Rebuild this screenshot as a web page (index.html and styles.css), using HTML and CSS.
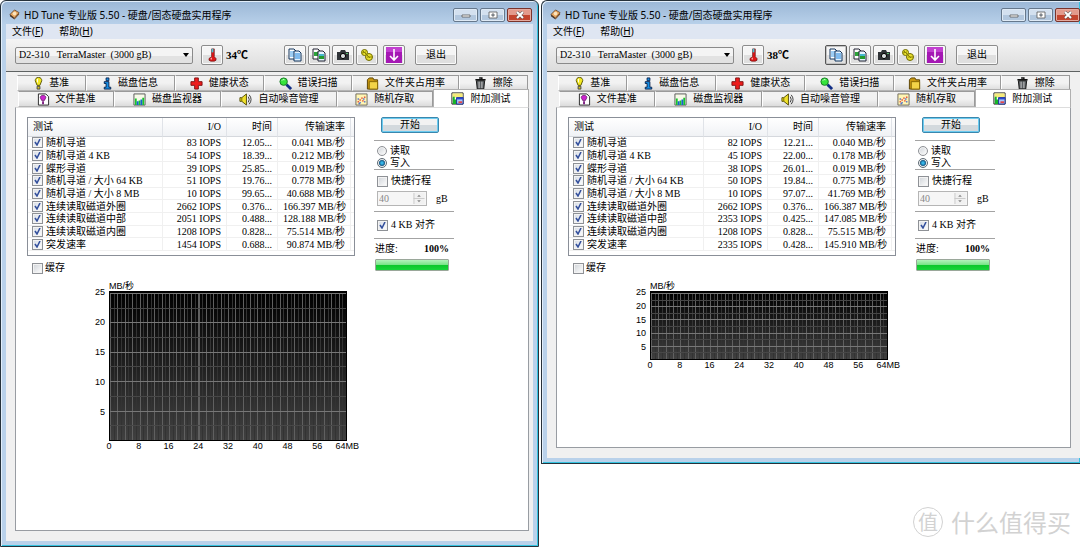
FILE: index.html
```html
<!DOCTYPE html>
<html lang="zh-CN">
<head>
<meta charset="utf-8">
<title>HD Tune 专业版 5.50</title>
<link rel="stylesheet" href="styles.css">
</head>
<body>
<svg class="sprite" aria-hidden="true">
  <symbol id="logo" viewBox="0 0 12 12"><path d="M1 6 6 1l5 3-5 6z" fill="#e9a860" stroke="#5b3a20" stroke-width=".8"/><path d="M1 6v2l5 3.500V10z" fill="#4a3322"/><path d="m6 10 5-6v2l-5 5.500z" fill="#7d5230"/><circle cx="6" cy="5" r="2" fill="#fbe3bd"/></symbol>
  <symbol id="thermo" viewBox="0 0 10 16"><path d="M4 1h3v9l2 2v2l-2 1H3l-2-1v-2l3-2z" fill="#e01818" stroke="#6b0d0d" stroke-width=".8"/><path d="M4 1h2v4H4z" fill="#45c8d8"/><path d="M3 11h1v2H3z" fill="#fff"/></symbol>
  <symbol id="copy" viewBox="0 0 14 14"><path d="M1 1h5l2 2v8H1z" fill="#fff" stroke="#12345c"/><path d="M2 4h4M2 6h4M2 8h4" stroke="#3c9be8"/><path d="M6 3h5l2 2v8H6z" fill="#e4f3ff" stroke="#12345c"/><path d="M7 6h5M7 8h5M7 10h5" stroke="#1d83dd"/></symbol>
  <symbol id="copyimg" viewBox="0 0 14 14"><path d="M1 1h5l2 2v8H1z" fill="#fff" stroke="#223"/><path d="M2 4h4v4H2z" fill="#2ca33a"/><path d="M6 3h5l2 2v8H6z" fill="#e4f3ff" stroke="#223"/><path d="M7 6h5v5H7z" fill="#45b7cc"/><path d="M7 8h5v3H7z" fill="#229a2e"/></symbol>
  <symbol id="camera" viewBox="0 0 14 12"><path d="M1 3h3l1-2h4l1 2h3v8H1z" fill="#303438"/><circle cx="7" cy="7" r="2.600" fill="#d9dddf" stroke="#000"/><path d="M10 4h2v1h-2z" fill="#58c06c"/></symbol>
  <symbol id="save" viewBox="0 0 14 14"><circle cx="4.500" cy="4.500" r="3" fill="#e8e02e" stroke="#6f6a00"/><circle cx="9" cy="9" r="3.500" fill="#e8e02e" stroke="#6f6a00"/><path d="m3 3 7 7M7 9h5M2 5l4-1" stroke="#8a8200"/></symbol>
  <symbol id="down" viewBox="0 0 16 16"><path d="M0 0h16v16H0z" fill="#a518b4"/><path d="M0 0h16v5H0z" fill="#c23fd0"/><path d="M8 2v10M4 9l4 4 4-4" fill="none" stroke="#fff" stroke-width="1.600"/></symbol>
  <symbol id="bulb" viewBox="0 0 9 14"><path d="M4.500 .500c2.500 0 3.500 1.500 3.500 3.500L6 9H3L1 4C1 2 2 .500 4.500.500z" fill="#f4ea22" stroke="#555000"/><path d="M3 2h1v4H3z" fill="#fff"/><path d="M3 10h3v3H3z" fill="#d6c51a" stroke="#444"/></symbol>
  <symbol id="info" viewBox="0 0 9 14"><path d="M3 1h3v3H3zM1 5h5v6h2v2H1v-2h2V7H1z" fill="#1590e6" stroke="#06204d"/></symbol>
  <symbol id="cross" viewBox="0 0 14 14"><path d="M5 1h4v4h4v4H9v4H5V9H1V5h4z" fill="#ee1c1c" stroke="#7d1010"/></symbol>
  <symbol id="find" viewBox="0 0 14 14"><path d="m8 8 5 5" stroke="#102d85" stroke-width="3"/><circle cx="5" cy="5" r="4" fill="#35e43c" stroke="#167524"/><path d="M3 4q1-2 3-1" fill="none" stroke="#d5ffd5"/></symbol>
  <symbol id="folder" viewBox="0 0 13 14"><path d="M1 3 3 1h4l1 2h4v10H1z" fill="#c99812" stroke="#574000"/><path d="M3 5h9v8H3z" fill="#f3d447" stroke="#846500"/></symbol>
  <symbol id="trash" viewBox="0 0 13 14"><path d="M1 3h11M5 1h3v2" fill="none" stroke="#111" stroke-width="1.500"/><path d="M2 4h9l-1 9H3z" fill="#5b5f62" stroke="#111"/><path d="M5 5v7M8 5v7" stroke="#d0d0d0"/></symbol>
  <symbol id="filebench" viewBox="0 0 13 14"><path d="M1 1h8l3 3v9H1z" fill="#fff" stroke="#222"/><path d="M6 2.500c2 0 3 1 3 2.500L7.500 8h-3L3 5c0-1.500 1-2.500 3-2.500z" fill="#cc25cf" stroke="#531056" stroke-width=".7"/><path d="M5 9h2v3H5z" fill="#7c1a80"/></symbol>
  <symbol id="monitor" viewBox="0 0 14 14"><path d="M1 1h12v12H1z" fill="#f7fbe9" stroke="#555"/><path d="M2 6h2v7H2zM6 8h2v5H6zM10 5h2v8h-2z" fill="#18c72a"/><path d="M4 9h2v4H4zM8 7h2v6H8z" fill="#1762cc"/></symbol>
  <symbol id="speaker" viewBox="0 0 14 14"><path d="M1 5h2l5-4v12L3 9H1z" fill="#f0e12b" stroke="#514a00"/><path d="M3 5v4" stroke="#776d00"/><path d="M10 4q2 3 0 6M11 2q4 5 0 10" fill="none" stroke="#333"/></symbol>
  <symbol id="scatter" viewBox="0 0 14 14"><path d="M1 1h12v12H1z" fill="#fff6b4" stroke="#6b675b"/><path d="M3 9h1v1H3zM5 7h1v1H5zM8 8h1v1H8zM10 4h1v1h-1zM7 5h1v1H7z" fill="#e02828" stroke="#e02828" stroke-width=".4"/><path d="M3 6h1v1H3zM5 10h1v1H5zM9 6h1v1H9zM10 9h1v1h-1zM4 11h1v1H4z" fill="#315bd4" stroke="#315bd4" stroke-width=".4"/></symbol>
  <symbol id="extra" viewBox="0 0 14 14"><path d="M1 1h12v12H1z" fill="#fff" stroke="#111"/><path d="M1.500 1.500h11V6h-11z" fill="#f5eb7b"/><path d="M2 5h2v8H2zM4 8h2v5H4z" fill="#16b528"/><path d="M6 6h7v7H6z" fill="#a6c8ff" stroke="#182a92"/><path d="M6 6h7v2H6z" fill="#2947cb"/><path d="M8 10h4v2H8z" fill="#e44848"/></symbol>
</svg>

<main class="desktop">
  <section class="window window-full">
    <header class="titlebar">
      <svg class="logo"><use href="#logo"/></svg>
      <h1>HD Tune 专业版 5.50 - 硬盘/固态硬盘实用程序</h1>
      <div class="captions">
        <button class="caption" aria-label="最小化"><svg viewBox="0 0 10 8"><path d="M1 4h8v2H1z" fill="#fff" stroke="#555" stroke-width=".8"/></svg></button>
        <button class="caption" aria-label="最大化"><svg viewBox="0 0 10 8"><path d="M1 1h8v6H1zM4 3v2h2V3z" fill="#fff" fill-rule="evenodd" stroke="#555" stroke-width=".8"/></svg></button>
        <button class="caption close" aria-label="关闭"><svg viewBox="0 0 10 8"><path d="m2 1 6 6M8 1 2 7" stroke="#555" stroke-width="3"/><path d="m2 1 6 6M8 1 2 7" stroke="#fff" stroke-width="2"/></svg></button>
      </div>
    </header>
    <div class="client">
      <nav class="menu"><button>文件(<u>F</u>)</button><button>帮助(<u>H</u>)</button></nav>
      <div class="toolbar">
        <select class="drive" aria-label="驱动器"><option>D2-310&nbsp;&nbsp; TerraMaster&nbsp; (3000 gB)</option></select>
        <button class="tool" aria-label="温度"><svg class="thermo"><use href="#thermo"/></svg></button>
        <output class="temp">34℃</output>
        <div class="tools">
          <button class="tool" aria-label="复制文本"><svg><use href="#copy"/></svg></button>
          <button class="tool" aria-label="复制截图"><svg><use href="#copyimg"/></svg></button>
          <button class="tool" aria-label="截图"><svg><use href="#camera"/></svg></button>
          <button class="tool" aria-label="选项"><svg><use href="#save"/></svg></button>
          <button class="tool tool-down" aria-label="保存"><svg><use href="#down"/></svg></button>
          <button class="tool exit">退出</button>
        </div>
      </div>
      <div class="page">
        <div class="tabs tabs-back">
          <button><svg class="slim"><use href="#bulb"/></svg>基准</button>
          <button class="w89"><svg class="slim"><use href="#info"/></svg>磁盘信息</button>
          <button class="w89"><svg><use href="#cross"/></svg>健康状态</button>
          <button class="w89"><svg><use href="#find"/></svg>错误扫描</button>
          <button class="w107"><svg><use href="#folder"/></svg>文件夹占用率</button>
          <button><svg><use href="#trash"/></svg>擦除</button>
        </div>
        <div class="tabs tabs-front">
          <button class="w96"><svg><use href="#filebench"/></svg>文件基准</button>
          <button class="w107"><svg><use href="#monitor"/></svg>磁盘监视器</button>
          <button class="w116"><svg><use href="#speaker"/></svg>自动噪音管理</button>
          <button class="w96"><svg><use href="#scatter"/></svg>随机存取</button>
          <button class="w96 active"><svg><use href="#extra"/></svg>附加测试</button>
        </div>
        <div class="panel">
          <div class="results">
            <div class="list">
              <table>
                <colgroup><col class="c-name"><col class="c-io"><col class="c-time"><col class="c-rate"><col></colgroup>
                <thead><tr><th>测试</th><th>I/O</th><th>时间</th><th>传输速率</th><th></th></tr></thead>
                <tbody>
                  <tr><td><label><input type="checkbox" checked>随机寻道</label></td><td>83 IOPS</td><td>12.05...</td><td>0.041 MB/秒</td><td></td></tr>
                  <tr><td><label><input type="checkbox" checked>随机寻道 4 KB</label></td><td>54 IOPS</td><td>18.39...</td><td>0.212 MB/秒</td><td></td></tr>
                  <tr><td><label><input type="checkbox" checked>蝶形寻道</label></td><td>39 IOPS</td><td>25.85...</td><td>0.019 MB/秒</td><td></td></tr>
                  <tr><td><label><input type="checkbox" checked>随机寻道 / 大小 64 KB</label></td><td>51 IOPS</td><td>19.76...</td><td>0.778 MB/秒</td><td></td></tr>
                  <tr><td><label><input type="checkbox" checked>随机寻道 / 大小 8 MB</label></td><td>10 IOPS</td><td>99.65...</td><td>40.688 MB/秒</td><td></td></tr>
                  <tr><td><label><input type="checkbox" checked>连续读取磁道外圈</label></td><td>2662 IOPS</td><td>0.376...</td><td>166.397 MB/秒</td><td></td></tr>
                  <tr><td><label><input type="checkbox" checked>连续读取磁道中部</label></td><td>2051 IOPS</td><td>0.488...</td><td>128.188 MB/秒</td><td></td></tr>
                  <tr><td><label><input type="checkbox" checked>连续读取磁道内圈</label></td><td>1208 IOPS</td><td>0.828...</td><td>75.514 MB/秒</td><td></td></tr>
                  <tr><td><label><input type="checkbox" checked>突发速率</label></td><td>1454 IOPS</td><td>0.688...</td><td>90.874 MB/秒</td><td></td></tr>
                </tbody>
              </table>
            </div>
            <label class="cache"><input type="checkbox">缓存</label>
            <figure class="chart">
              <figcaption>MB/秒</figcaption>
              <div class="y-axis"><span>25</span><span>20</span><span>15</span><span>10</span><span>5</span></div>
              <div class="plot"></div>
              <div class="x-axis"><span>0</span><span>8</span><span>16</span><span>24</span><span>32</span><span>40</span><span>48</span><span>56</span><span>64MB</span></div>
            </figure>
          </div>
          <form class="side">
            <button type="button" class="start">开始</button>
            <div class="group modes">
              <label><input type="radio" name="mode1">读取</label>
              <label><input type="radio" name="mode1" checked>写入</label>
            </div>
            <div class="group stroke">
              <label><input type="checkbox">快捷行程</label>
              <div class="size"><div class="spin"><input type="text" value="40" disabled aria-label="行程大小"><svg viewBox="0 0 12 12"><path d="M0 0h12v12H0z" fill="#f1f1f1"/><path d="M0 6h12M.500 0v12" stroke="#c8c8c8"/><path d="m4 4 2-2 2 2zM4 8l2 2 2-2z" fill="#888"/></svg></div><span>gB</span></div>
            </div>
            <div class="group align"><label><input type="checkbox" checked>4 KB 对齐</label></div>
            <div class="group progress">
              <div class="status"><label for="p1">进度:</label><b>100%</b></div>
              <progress id="p1" value="100" max="100"></progress>
            </div>
          </form>
        </div>
      </div>
    </div>
  </section>

  <section class="window window-short">
    <header class="titlebar">
      <svg class="logo"><use href="#logo"/></svg>
      <h1>HD Tune 专业版 5.50 - 硬盘/固态硬盘实用程序</h1>
      <div class="captions">
        <button class="caption" aria-label="最小化"><svg viewBox="0 0 10 8"><path d="M1 4h8v2H1z" fill="#fff" stroke="#555" stroke-width=".8"/></svg></button>
        <button class="caption" aria-label="最大化"><svg viewBox="0 0 10 8"><path d="M1 1h8v6H1zM4 3v2h2V3z" fill="#fff" fill-rule="evenodd" stroke="#555" stroke-width=".8"/></svg></button>
        <button class="caption close" aria-label="关闭"><svg viewBox="0 0 10 8"><path d="m2 1 6 6M8 1 2 7" stroke="#555" stroke-width="3"/><path d="m2 1 6 6M8 1 2 7" stroke="#fff" stroke-width="2"/></svg></button>
      </div>
    </header>
    <div class="client">
      <nav class="menu"><button>文件(<u>F</u>)</button><button>帮助(<u>H</u>)</button></nav>
      <div class="toolbar">
        <select class="drive" aria-label="驱动器"><option>D2-310&nbsp;&nbsp; TerraMaster&nbsp; (3000 gB)</option></select>
        <button class="tool" aria-label="温度"><svg class="thermo"><use href="#thermo"/></svg></button>
        <output class="temp">38℃</output>
        <div class="tools">
          <button class="tool focused" aria-label="复制文本"><svg><use href="#copy"/></svg></button>
          <button class="tool" aria-label="复制截图"><svg><use href="#copyimg"/></svg></button>
          <button class="tool" aria-label="截图"><svg><use href="#camera"/></svg></button>
          <button class="tool" aria-label="选项"><svg><use href="#save"/></svg></button>
          <button class="tool tool-down" aria-label="保存"><svg><use href="#down"/></svg></button>
          <button class="tool exit">退出</button>
        </div>
      </div>
      <div class="page">
        <div class="tabs tabs-back">
          <button><svg class="slim"><use href="#bulb"/></svg>基准</button>
          <button class="w89"><svg class="slim"><use href="#info"/></svg>磁盘信息</button>
          <button class="w89"><svg><use href="#cross"/></svg>健康状态</button>
          <button class="w89"><svg><use href="#find"/></svg>错误扫描</button>
          <button class="w107"><svg><use href="#folder"/></svg>文件夹占用率</button>
          <button><svg><use href="#trash"/></svg>擦除</button>
        </div>
        <div class="tabs tabs-front">
          <button class="w96"><svg><use href="#filebench"/></svg>文件基准</button>
          <button class="w107"><svg><use href="#monitor"/></svg>磁盘监视器</button>
          <button class="w116"><svg><use href="#speaker"/></svg>自动噪音管理</button>
          <button class="w96"><svg><use href="#scatter"/></svg>随机存取</button>
          <button class="w96 active"><svg><use href="#extra"/></svg>附加测试</button>
        </div>
        <div class="panel">
          <div class="results">
            <div class="list">
              <table>
                <colgroup><col class="c-name"><col class="c-io"><col class="c-time"><col class="c-rate"><col></colgroup>
                <thead><tr><th>测试</th><th>I/O</th><th>时间</th><th>传输速率</th><th></th></tr></thead>
                <tbody>
                  <tr><td><label><input type="checkbox" checked>随机寻道</label></td><td>82 IOPS</td><td>12.21...</td><td>0.040 MB/秒</td><td></td></tr>
                  <tr><td><label><input type="checkbox" checked>随机寻道 4 KB</label></td><td>45 IOPS</td><td>22.00...</td><td>0.178 MB/秒</td><td></td></tr>
                  <tr><td><label><input type="checkbox" checked>蝶形寻道</label></td><td>38 IOPS</td><td>26.01...</td><td>0.019 MB/秒</td><td></td></tr>
                  <tr><td><label><input type="checkbox" checked>随机寻道 / 大小 64 KB</label></td><td>50 IOPS</td><td>19.84...</td><td>0.775 MB/秒</td><td></td></tr>
                  <tr><td><label><input type="checkbox" checked>随机寻道 / 大小 8 MB</label></td><td>10 IOPS</td><td>97.07...</td><td>41.769 MB/秒</td><td></td></tr>
                  <tr><td><label><input type="checkbox" checked>连续读取磁道外圈</label></td><td>2662 IOPS</td><td>0.376...</td><td>166.387 MB/秒</td><td></td></tr>
                  <tr><td><label><input type="checkbox" checked>连续读取磁道中部</label></td><td>2353 IOPS</td><td>0.425...</td><td>147.085 MB/秒</td><td></td></tr>
                  <tr><td><label><input type="checkbox" checked>连续读取磁道内圈</label></td><td>1208 IOPS</td><td>0.828...</td><td>75.515 MB/秒</td><td></td></tr>
                  <tr><td><label><input type="checkbox" checked>突发速率</label></td><td>2335 IOPS</td><td>0.428...</td><td>145.910 MB/秒</td><td></td></tr>
                </tbody>
              </table>
            </div>
            <label class="cache"><input type="checkbox">缓存</label>
            <figure class="chart">
              <figcaption>MB/秒</figcaption>
              <div class="y-axis"><span>25</span><span>20</span><span>15</span><span>10</span><span>5</span></div>
              <div class="plot"></div>
              <div class="x-axis"><span>0</span><span>8</span><span>16</span><span>24</span><span>32</span><span>40</span><span>48</span><span>56</span><span>64MB</span></div>
            </figure>
          </div>
          <form class="side">
            <button type="button" class="start">开始</button>
            <div class="group modes">
              <label><input type="radio" name="mode2">读取</label>
              <label><input type="radio" name="mode2" checked>写入</label>
            </div>
            <div class="group stroke">
              <label><input type="checkbox">快捷行程</label>
              <div class="size"><div class="spin"><input type="text" value="40" disabled aria-label="行程大小"><svg viewBox="0 0 12 12"><path d="M0 0h12v12H0z" fill="#f1f1f1"/><path d="M0 6h12M.500 0v12" stroke="#c8c8c8"/><path d="m4 4 2-2 2 2zM4 8l2 2 2-2z" fill="#888"/></svg></div><span>gB</span></div>
            </div>
            <div class="group align"><label><input type="checkbox" checked>4 KB 对齐</label></div>
            <div class="group progress">
              <div class="status"><label for="p2">进度:</label><b>100%</b></div>
              <progress id="p2" value="100" max="100"></progress>
            </div>
          </form>
        </div>
      </div>
    </div>
  </section>
  <div class="watermark"><span class="mark">值</span><span>什么值得买</span></div>
</main>
</body>
</html>
```
FILE: styles.css
```css
* { box-sizing: border-box; }

body {
  margin: 0;
  background: #fff;
  color: #000;
  font: 10px/12px "Liberation Serif", "Noto Sans CJK SC", serif;
}

button, input, select { font: inherit; color: inherit; margin: 0; padding: 0; }
.sprite { display: none; }

.desktop {
  position: relative;
  display: grid;
  grid-template-columns: minmax(0, 1fr) minmax(0, 1fr);
  column-gap: 2px;
  align-items: start;
  min-height: 100vh;
  overflow: hidden;
}

/* Window frame */
.window {
  display: flex;
  flex-direction: column;
  border: 1px solid #26313a;
  border-radius: 6px 6px 0 0;
  padding: 0 5px 5px;
  background: linear-gradient(#9bb7d6, #b9d1ea 24px);
  box-shadow: inset 1px 1px 0 #e2eefa, inset -1px -1px 0 #35c3e0;
}
.window-full { min-height: 100vh; }
.window-short { border-right: 0; padding-right: 0; border-top-right-radius: 0; }

.titlebar { display: flex; align-items: center; height: 23px; padding-left: 3px; }
.logo { width: 11px; height: 11px; margin: 3px 4px 0 0; }
.titlebar h1 {
  flex: 1;
  margin: 4px 0 0;
  font: 10px/14px "Noto Sans", "Noto Sans CJK SC", sans-serif;
  white-space: nowrap;
}
.captions { display: flex; gap: 2px; padding: 4px 1px 0 0; }
.window-short .captions { padding-right: 0; }
.caption {
  display: grid;
  place-items: center;
  width: 25px;
  height: 14px;
  border: 1px solid #66788c;
  border-radius: 2px;
  background: linear-gradient(#d3e0ef 50%, #b2c7de 50%);
  box-shadow: inset 0 0 0 1px #dfeaf5;
}
.caption svg { width: 10px; height: 8px; }
.close { border-color: #7a342c; background: linear-gradient(#e39a8c 50%, #c3452f 50%); box-shadow: inset 0 0 0 1px #e5aba0; }

.client { flex: 1; display: flex; flex-direction: column; background: #f0f0f0; }

.menu {
  display: flex;
  gap: 16px;
  height: 15px;
  padding-left: 6px;
  background: #dfe6f2;
}
.menu button {
  border: 0;
  background: none;
  font: 10px/15px "Noto Sans", "Noto Sans CJK SC", sans-serif;
}

.toolbar {
  display: flex;
  align-items: center;
  height: 33px;
  padding: 0 9px;
  border-bottom: 1px solid #5e6262;
  background: linear-gradient(#f4f4f4, #dcdcdc);
}
.drive {
  appearance: none;
  width: 178px;
  height: 17px;
  padding-left: 3px;
  border: 1px solid #8a8a8a;
  border-radius: 2px;
  background: url("data:image/svg+xml,%3Csvg xmlns='http://www.w3.org/2000/svg' width='6' height='4'%3E%3Cpath d='M0 0h6L3 4z'/%3E%3C/svg%3E") no-repeat right 3px center, linear-gradient(#f4f4f4 50%, #e2e2e2 50%);
}
.tool {
  display: grid;
  place-items: center;
  width: 22px;
  height: 20px;
  border: 1px solid #8c8c8c;
  border-radius: 2px;
  background: linear-gradient(#f5f5f5 50%, #dfdfdf 50%);
  box-shadow: inset 0 0 0 1px #fafafa;
}
.tool svg { width: 14px; height: 14px; }
.tool .thermo { width: 9px; height: 14px; }
.drive + .tool { margin-left: 8px; }
.focused { border-color: #555; box-shadow: inset 0 0 0 1px #c2c2c2; }
.temp { width: 58px; margin-left: 3px; font-size: 11px; font-weight: bold; }
.tools { display: flex; gap: 2px; }
.tool-down { margin-left: 3px; }
.tool-down svg { width: 16px; height: 16px; }
.exit { width: 42px; margin-left: 8px; }

/* Tabs */
.page { flex: 1; display: flex; flex-direction: column; padding: 3px 4px 10px 9px; }
.window-short .page { padding-right: 9px; }
.tabs { display: flex; }
.tabs-back { height: 16px; margin: 0 1px 0 2px; }
.tabs-front { height: 16px; margin-left: 3px; }
.tabs button {
  flex: 69 1 0;
  display: flex;
  align-items: center;
  justify-content: center;
  gap: 6px;
  min-width: 0;
  border: 1px solid #9a9a9a;
  border-left-color: #fff;
  border-bottom-color: #b4b4b4;
  background: linear-gradient(#f2f2f2 50%, #dcdcdc);
  white-space: nowrap;
}
.tabs .w89 { flex-grow: 89; }
.tabs .w96 { flex-grow: 96; }
.tabs .w107 { flex-grow: 107; }
.tabs .w116 { flex-grow: 116; }
.tabs svg { width: 13px; height: 13px; flex: none; }
.tabs .slim { width: 9px; }
.tabs .active { margin-top: -2px; border-color: #b0b0b0; border-bottom: 0; background: #fff; }

.panel {
  flex: 1;
  display: flex;
  align-items: flex-start;
  gap: 19px;
  padding: 9px 11px;
  border: 1px solid #989ca2;
  border-top-color: #ddd;
  background: #fff;
}
.window-short .panel { padding-bottom: 77px; }

/* Result list */
.results { width: 328px; }
.list { border: 1px solid #8a8f98; padding-bottom: 4px; }
table {
  width: 100%;
  height: 133px;
  table-layout: fixed;
  border-collapse: separate;
  border-spacing: 0;
}
.c-name { width: 135px; }
.c-io { width: 64px; }
.c-time { width: 51px; }
.c-rate { width: 73px; }
th {
  height: 19px;
  padding: 0 5px;
  border-right: 1px solid #e0e3e8;
  border-bottom: 1px solid #d5d8dd;
  background: linear-gradient(#fff, #f0f2f5);
  font-weight: normal;
  text-align: right;
}
td {
  padding: 0 5px;
  border-right: 1px solid #f0f0f0;
  border-bottom: 1px solid #f0f0f0;
  line-height: 11px;
  text-align: right;
  white-space: nowrap;
}
th:first-child, td:first-child { text-align: left; }
td:first-child { padding-left: 4px; }
th:last-child, td:last-child { padding: 0; border-right: 0; }

label { display: flex; align-items: center; gap: 3px; white-space: nowrap; }
td label { height: 11px; }

input[type="checkbox"], input[type="radio"] {
  appearance: none;
  flex: none;
  width: 11px;
  height: 11px;
  border: 1px solid #8e9196;
  background: linear-gradient(135deg, #cfd3d8, #fff);
  box-shadow: inset 0 0 0 1px #f3f3f3;
}
input[type="checkbox"]:checked {
  background: url("data:image/svg+xml,%3Csvg xmlns='http://www.w3.org/2000/svg' width='9' height='9'%3E%3Cpath d='m2 4 2 3 3-6' fill='none' stroke='%23334f9c' stroke-width='1.6'/%3E%3C/svg%3E") no-repeat center, linear-gradient(135deg, #d5dbe4, #fff);
}
input[type="radio"] { width: 10px; height: 10px; border-radius: 50%; }
input[type="radio"]:checked { border-color: #5d6a74; background: radial-gradient(circle, #35b5e8 0 1px, #0b4672 3px, #e4edf3 4px); }

.cache { width: 60px; margin: 6px 0 0 5px; gap: 2px; }

/* Chart */
.chart {
  display: grid;
  grid-template-columns: 78px 238px;
  column-gap: 4px;
  margin: 7px 0 0;
  font-family: "Liberation Sans", "Noto Sans CJK SC", sans-serif;
  font-size: 9px;
  line-height: 10px;
}
.chart figcaption { grid-column: 2; height: 10px; }
.y-axis { display: grid; grid-auto-rows: 1fr; margin: -4px 0 4px; text-align: right; }
.plot {
  height: 150px;
  border: 1px solid #000;
  border-top-width: 2px;
  background:
    repeating-linear-gradient(#777 0 1px, transparent 1px 20%),
    repeating-linear-gradient(#474747 0 1px, transparent 1px 10%),
    repeating-linear-gradient(90deg, #606060 0 1px, transparent 1px 3.125%),
    repeating-linear-gradient(90deg, #333 0 1px, transparent 1px 1.5625%),
    linear-gradient(#000, #404040);
}
.window-short .plot { height: 69px; }
.x-axis { grid-column: 2; display: flex; margin: 0 -15px; }
.x-axis span { flex: 1 1 0; min-width: 0; text-align: center; }

/* Controls beside the list */
.side { width: 80px; }
.start {
  display: block;
  width: 58px;
  height: 16px;
  margin: 0 0 7px 7px;
  border: 1px solid #3a87ad;
  border-radius: 2px;
  background: linear-gradient(#f2f2f2 50%, #d3d9dd 50%);
  box-shadow: inset 0 0 0 1px #6bcbf0;
  line-height: 12px;
}
.group { border-top: 1px solid #a3a3a3; }
.modes { height: 29px; padding: 4px 0 0 3px; }
.stroke { height: 42px; padding: 5px 0 0 3px; }
.align { height: 27px; padding: 7px 0 0 3px; }
.progress { padding: 4px 5px 0 1px; }
.size { display: flex; align-items: center; gap: 9px; margin-top: 4px; }
.spin { display: flex; width: 50px; height: 15px; padding: 1px; border: 1px solid #b5b5b5; background: #f6f6f6; }
.spin input { flex: 1; min-width: 0; border: 0; background: none; color: #888; }
.spin svg { width: 12px; height: 11px; }
.status { display: flex; justify-content: space-between; }
progress {
  appearance: none;
  display: block;
  width: 100%;
  height: 12px;
  margin-top: 4px;
  border: 1px solid #9aa79a;
  border-radius: 1px;
}
progress::-webkit-progress-bar { background: #e6e6e6; }
progress::-webkit-progress-value { background: linear-gradient(#b4f3bb, #7ce58a 45%, #0cc629 50%, #18d53a); }

/* Site mark over the page corner */
.watermark {
  position: absolute;
  right: 9px;
  bottom: 10px;
  display: flex;
  align-items: center;
  gap: 8px;
  color: #d2d2d2;
  font: 24px/30px "Noto Sans CJK SC", sans-serif;
}
.mark {
  width: 30px;
  height: 30px;
  border: 1px solid #d2d2d2;
  border-radius: 50%;
  font-size: 20px;
  line-height: 27px;
  text-align: center;
}
```
